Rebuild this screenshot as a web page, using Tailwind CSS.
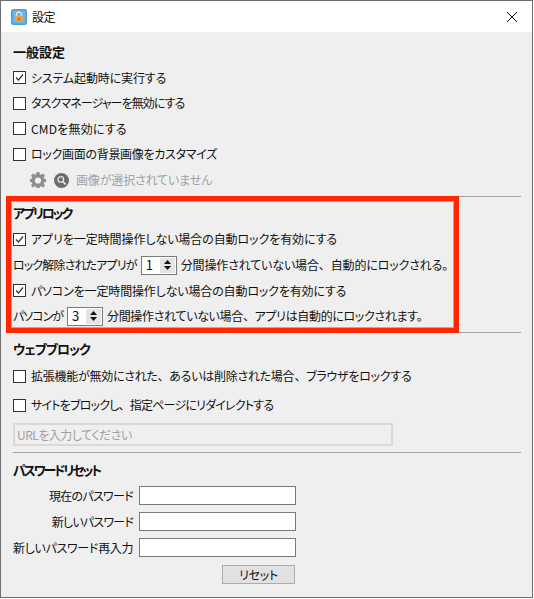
<!DOCTYPE html>
<html lang="ja">
  <head>
    <meta charset="UTF-8" />
    <title>設定</title>
    <script src="https://cdn.jsdelivr.net/npm/@tailwindcss/browser@4"></script>
  </head>
  <body class="bg-white font-['Noto_Sans_CJK_JP','Noto_Sans',sans-serif] text-[12px] text-[#111] [font-feature-settings:'palt'] whitespace-nowrap">
    <!-- Window -->
    <div class="relative w-[533px] h-[598px] border border-[#6e6e6e] bg-[#efefef] overflow-hidden">
      <!-- Title bar -->
      <div class="h-[31px] bg-white flex items-center pl-[10px] pr-[14px]">
        <svg width="16" height="16" viewBox="0 0 16 16">
          <rect width="16" height="16" rx="2.5" fill="#4a9be0" />
          <rect x="1.5" y="1.5" width="13" height="13" rx="1.5" fill="#6db4ee" />
          <path d="M5.5 7.5V5.5a2.5 2.5 0 0 1 5 0v2" fill="none" stroke="#e8e2d2" stroke-width="1.4" />
          <rect x="4" y="7" width="8" height="6" rx="1" fill="#e8a33a" />
          <rect x="7.4" y="9" width="1.2" height="2.4" fill="#8a5a1c" />
        </svg>
        <span class="ml-[5px] tracking-[-0.5px]">設定</span>
        <svg class="ml-auto" width="12" height="12" viewBox="0 0 12 12">
          <path d="M1 1l10 10M11 1L1 11" stroke="#111" stroke-width="1" fill="none" />
        </svg>
      </div>

      <!-- General -->
      <div class="px-[12px] pt-[7px]">
        <div class="h-[26px] flex items-center font-bold text-[13px]">一般設定</div>
        <div class="h-[25px] flex items-center">
          <span class="w-[13px] h-[13px] border border-[#333] bg-white shrink-0 flex items-center justify-center">
            <svg width="11" height="11" viewBox="0 0 11 11"><path d="M2 5.5l2.5 2.5L9 2.5" fill="none" stroke="#333" stroke-width="1.2" /></svg>
          </span>
          <span class="ml-[5px] tracking-[-0.15px]">システム起動時に実行する</span>
        </div>
        <div class="h-[26px] flex items-center">
          <span class="w-[13px] h-[13px] border border-[#333] bg-white shrink-0"></span>
          <span class="ml-[5px] tracking-[-0.9px]">タスクマネージャーを無効にする</span>
        </div>
        <div class="h-[25px] flex items-center">
          <span class="w-[13px] h-[13px] border border-[#333] bg-white shrink-0"></span>
          <span class="ml-[5px] tracking-[0.2px]">CMDを無効にする</span>
        </div>
        <div class="h-[26px] flex items-center">
          <span class="w-[13px] h-[13px] border border-[#333] bg-white shrink-0"></span>
          <span class="ml-[5px] tracking-[-0.3px]">ロック画面の背景画像をカスタマイズ</span>
        </div>
        <div class="h-[26px] flex items-center pl-[17px] text-[#a0a0a0]">
          <svg width="16" height="16" viewBox="0 0 16 16">
            <path fill="#8f8f8f" fill-rule="evenodd" d="M6.6 0h2.8l.4 2.2 1.3.6L13 1.5l2 2-1.3 1.9.5 1.3 2.3.4v2.8l-2.3.4-.5 1.3 1.3 1.9-2 2-1.9-1.3-1.3.5-.4 2.3H6.6l-.4-2.3-1.3-.5L3 15.5l-2-2 1.3-1.9-.5-1.3L-.5 9.9V7.1l2.3-.4.5-1.3L1 3.5l2-2 1.9 1.3 1.3-.6zM8 5.4a3.1 3.1 0 1 0 0 6.2 3.1 3.1 0 0 0 0-6.2z" />
          </svg>
          <svg class="ml-[8px]" width="15" height="15" viewBox="0 0 15 15">
            <circle cx="7.5" cy="7.5" r="7.5" fill="#6c6c6c" />
            <circle cx="6.8" cy="6.4" r="2.8" fill="none" stroke="#e6e6e6" stroke-width="1.3" />
            <path d="M8.8 8.6l2.8 2.8" stroke="#e6e6e6" stroke-width="1.6" />
          </svg>
          <span class="ml-[7px] tracking-[-0.15px]">画像が選択されていません</span>
        </div>
        <div class="mt-[3px] h-px w-[508px] bg-[#a0a0a0]"></div>

        <!-- App lock -->
        <div class="mt-[3px] h-[26px] flex items-center font-bold text-[13px] tracking-[-2.2px]">アプリロック</div>
        <div class="h-[26px] flex items-center">
          <span class="w-[13px] h-[13px] border border-[#333] bg-white shrink-0 flex items-center justify-center">
            <svg width="11" height="11" viewBox="0 0 11 11"><path d="M2 5.5l2.5 2.5L9 2.5" fill="none" stroke="#333" stroke-width="1.2" /></svg>
          </span>
          <span class="ml-[5px] tracking-[-0.08px]">アプリを一定時間操作しない場合の自動ロックを有効にする</span>
        </div>
        <div class="h-[26px] flex items-center">
          <span class="tracking-[-0.85px]">ロック解除されたアプリが</span>
          <div class="ml-[4px] w-[36px] h-[19px] border border-[#7a7a7a] bg-white flex items-center justify-between pl-[4px] pr-px text-[13px]">
            <span>1</span>
            <span class="w-[15px] h-[15px] bg-[#e4e4e4] flex flex-col items-center justify-center gap-[2px]">
              <svg width="7" height="4" viewBox="0 0 7 4"><path d="M3.5 0L7 4H0z" fill="#111" /></svg>
              <svg width="7" height="4" viewBox="0 0 7 4"><path d="M0 0h7L3.5 4z" fill="#111" /></svg>
            </span>
          </div>
          <span class="ml-[4px] tracking-[-0.14px]">分間操作されていない場合<span class="[font-feature-settings:normal]">、</span>自動的にロックされる。</span>
        </div>
        <div class="h-[25px] flex items-center">
          <span class="w-[13px] h-[13px] border border-[#333] bg-white shrink-0 flex items-center justify-center">
            <svg width="11" height="11" viewBox="0 0 11 11"><path d="M2 5.5l2.5 2.5L9 2.5" fill="none" stroke="#333" stroke-width="1.2" /></svg>
          </span>
          <span class="ml-[5px] tracking-[-0.15px]">パソコンを一定時間操作しない場合の自動ロックを有効にする</span>
        </div>
        <div class="h-[26px] flex items-center">
          <span class="tracking-[-1px]">パソコンが</span>
          <div class="ml-[4px] w-[36px] h-[19px] border border-[#7a7a7a] bg-white flex items-center justify-between pl-[4px] pr-px text-[13px]">
            <span>3</span>
            <span class="w-[15px] h-[15px] bg-[#e4e4e4] flex flex-col items-center justify-center gap-[2px]">
              <svg width="7" height="4" viewBox="0 0 7 4"><path d="M3.5 0L7 4H0z" fill="#111" /></svg>
              <svg width="7" height="4" viewBox="0 0 7 4"><path d="M0 0h7L3.5 4z" fill="#111" /></svg>
            </span>
          </div>
          <span class="ml-[4px] tracking-[-0.33px]">分間操作されていない場合<span class="[font-feature-settings:normal]">、</span>アプリは自動的にロックされます。</span>
        </div>
        <div class="mt-[3px] h-px w-[508px] bg-[#a0a0a0]"></div>

        <!-- Web block -->
        <div class="mt-[3px] h-[26px] flex items-center font-bold text-[13px] tracking-[-1px]">ウェブブロック</div>
        <div class="mt-px h-[26px] flex items-center">
          <span class="w-[13px] h-[13px] border border-[#333] bg-white shrink-0"></span>
          <span class="ml-[5px] tracking-[-0.25px]">拡張機能が無効にされた<span class="[font-feature-settings:normal]">、</span>あるいは削除された場合<span class="[font-feature-settings:normal]">、</span>ブラウザをロックする</span>
        </div>
        <div class="mt-[3px] h-[26px] flex items-center">
          <span class="w-[13px] h-[13px] border border-[#333] bg-white shrink-0"></span>
          <span class="ml-[5px] tracking-[-0.8px]">サイトをブロックし<span class="[font-feature-settings:normal]">、</span>指定ページにリダイレクトする</span>
        </div>
        <div class="mt-[5px] w-[380px] h-[23px] border-2 border-[#d9d9d9] flex items-center pl-[2px] text-[#a0a0a0] tracking-[-0.5px]">URLを入力してください</div>
        <div class="mt-[6px] h-px w-[508px] bg-[#a0a0a0]"></div>

        <!-- Password reset -->
        <div class="mt-[4px] h-[26px] flex items-center font-bold text-[13px] tracking-[-2.2px]">パスワードリセット</div>
        <div class="mt-[3px] flex flex-col gap-[7px] w-[283px]">
          <div class="flex items-center justify-end">
            <span class="tracking-[-0.7px]">現在のパスワード</span>
            <div class="ml-[6px] w-[157px] h-[19px] border border-[#7a7a7a] bg-white"></div>
          </div>
          <div class="flex items-center justify-end">
            <span class="tracking-[-0.8px]">新しいパスワード</span>
            <div class="ml-[6px] w-[157px] h-[19px] border border-[#7a7a7a] bg-white"></div>
          </div>
          <div class="flex items-center justify-end">
            <span class="tracking-[-0.3px]">新しいパスワード再入力</span>
            <div class="ml-[6px] w-[157px] h-[19px] border border-[#7a7a7a] bg-white"></div>
          </div>
        </div>
        <div class="mt-[8px] ml-[209px] w-[73px] h-[19px] border border-[#adadad] bg-[#e1e1e1] flex items-center justify-center tracking-[-0.3px]">リセット</div>
      </div>

      <!-- Red highlight over the app lock section -->
      <div class="absolute left-[5px] top-[195px] w-[453px] h-[137px] border-[5px] border-[#ff2600] shadow-[inset_0_0_0_1px_#fb8f7c]"></div>
    </div>
  </body>
</html>
